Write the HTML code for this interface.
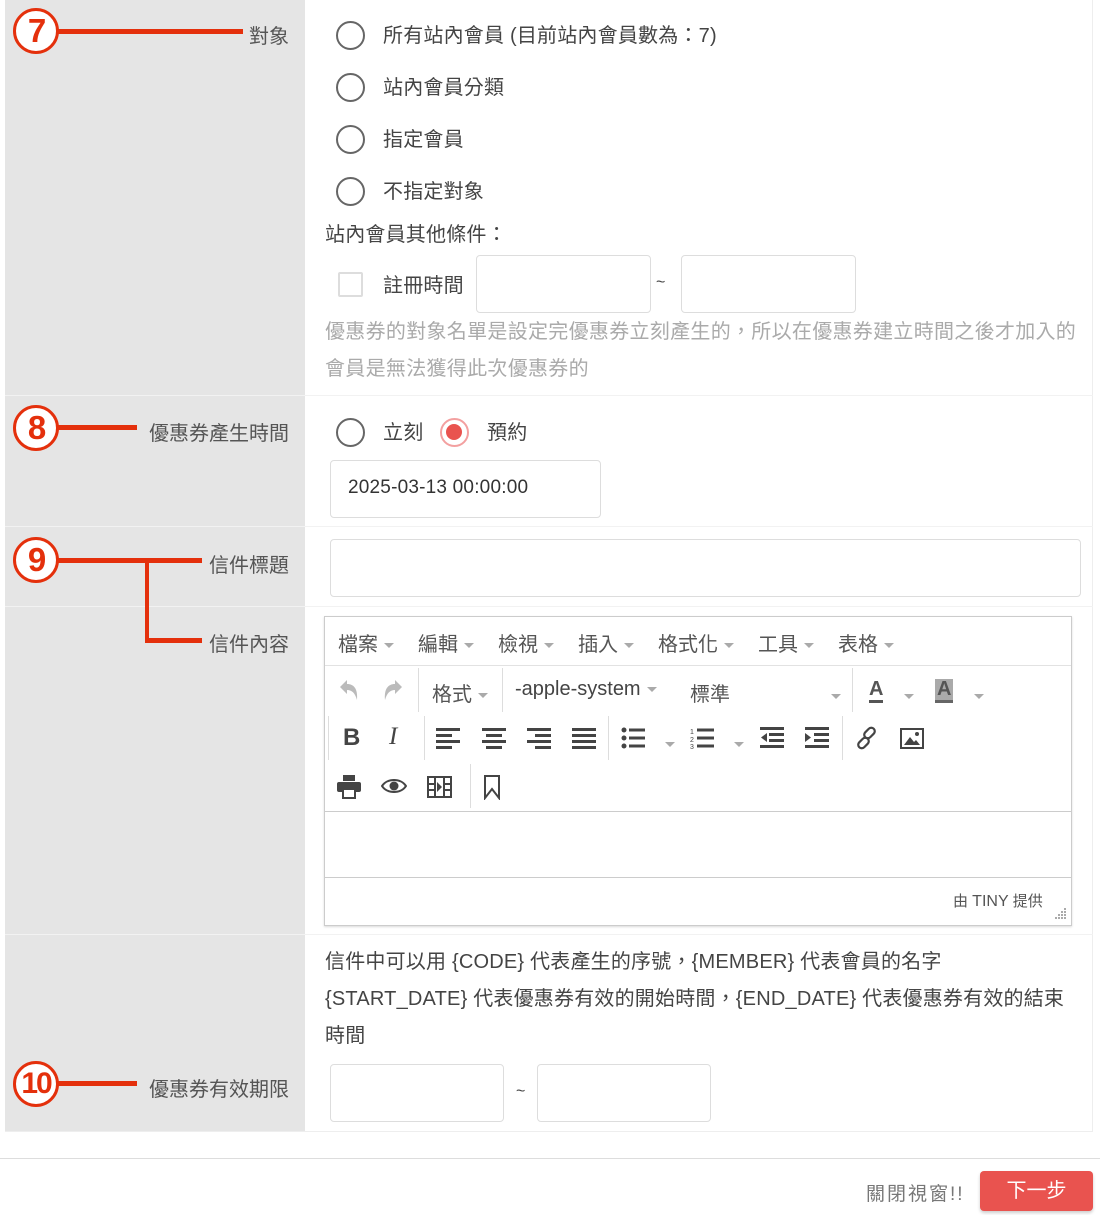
<!DOCTYPE html>
<html><head><meta charset="utf-8"><style>
*{margin:0;padding:0;box-sizing:border-box}
body{width:1100px;height:1215px;background:#fff;position:relative;font-family:"Liberation Sans","Noto Sans CJK TC",sans-serif;color:#444;overflow:hidden}
.a{position:absolute;white-space:nowrap}
.lab{background:#e5e5e5}
.t{font-size:20px;line-height:24px;letter-spacing:0.2px}
.lbl{font-size:20px;color:#555;text-align:right}
.inp{position:absolute;border:1px solid #ddd;border-radius:4px;background:#fff}
.rad{position:absolute;width:29px;height:29px;border:2.5px solid #666;border-radius:50%}
.line{position:absolute;background:#e4300c}
.mk{position:absolute;width:46px;height:46px;border:3.5px solid #e4300c;border-radius:50%;background:#fff;color:#e4300c;font-weight:bold;font-size:33px;line-height:39px;text-align:center;letter-spacing:-2px}
.hl{position:absolute;background:#eee;height:1px}
.mn{font-size:20px;color:#555}
.car{display:inline-block;width:0;height:0;border-left:5px solid transparent;border-right:5px solid transparent;border-top:5px solid #aaa;vertical-align:middle;margin-left:6px}
.sep{position:absolute;width:1px;background:#ddd}
</style></head><body>
<div class="a lab" style="left:5px;top:0;width:300px;height:1131px"></div>
<div class="a" style="left:1092px;top:0;width:1px;height:1131px;background:#eee"></div>
<div class="a" style="left:5px;top:1131px;width:1088px;height:1px;background:#eee"></div>
<div class="hl" style="left:5px;top:395px;width:1088px;background:#f2f2f2"></div>
<div class="hl" style="left:5px;top:526px;width:1088px;background:#f2f2f2"></div>
<div class="hl" style="left:5px;top:606px;width:1088px;background:#f2f2f2"></div>
<div class="hl" style="left:5px;top:934px;width:1088px;background:#f2f2f2"></div>

<div class="line" style="left:56px;top:29px;width:187px;height:5px"></div>
<div class="mk" style="left:13px;top:8px">7</div>
<div class="a lbl" style="left:200px;top:20px;width:89px">對象</div>

<div class="line" style="left:56px;top:425px;width:81px;height:5px"></div>
<div class="mk" style="left:13px;top:405px">8</div>
<div class="a lbl" style="left:140px;top:417px;width:149px">優惠券產生時間</div>

<div class="line" style="left:56px;top:558px;width:146px;height:5px"></div>
<div class="line" style="left:145px;top:558px;width:4px;height:84px"></div>
<div class="line" style="left:145px;top:638px;width:57px;height:5px"></div>
<div class="mk" style="left:13px;top:537px">9</div>
<div class="a lbl" style="left:200px;top:549px;width:89px">信件標題</div>
<div class="a lbl" style="left:200px;top:628px;width:89px">信件內容</div>

<div class="line" style="left:56px;top:1081px;width:81px;height:5px"></div>
<div class="mk" style="left:13px;top:1061px;font-size:30px">10</div>
<div class="a lbl" style="left:140px;top:1073px;width:149px">優惠券有效期限</div>

<div class="rad" style="left:336px;top:21px"></div><div class="a t" style="left:383px;top:24px">所有站內會員 (目前站內會員數為：7)</div>
<div class="rad" style="left:336px;top:73px"></div><div class="a t" style="left:383px;top:76px">站內會員分類</div>
<div class="rad" style="left:336px;top:125px"></div><div class="a t" style="left:383px;top:128px">指定會員</div>
<div class="rad" style="left:336px;top:177px"></div><div class="a t" style="left:383px;top:180px">不指定對象</div>
<div class="a t" style="left:325px;top:223px">站內會員其他條件：</div>
<div class="a" style="left:338px;top:272px;width:25px;height:25px;border:2px solid #ddd;border-radius:2px"></div>
<div class="a t" style="left:383px;top:274px">註冊時間</div>
<div class="inp" style="left:476px;top:255px;width:175px;height:58px"></div>
<div class="a t" style="left:656px;top:271px;font-size:16px">~</div>
<div class="inp" style="left:681px;top:255px;width:175px;height:58px"></div>
<div class="a t" style="left:325px;top:320px;color:#aaa;letter-spacing:0.3px">優惠券的對象名單是設定完優惠券立刻產生的，所以在優惠券建立時間之後才加入的</div>
<div class="a t" style="left:325px;top:357px;color:#aaa;letter-spacing:0.3px">會員是無法獲得此次優惠券的</div>

<div class="rad" style="left:336px;top:418px"></div><div class="a t" style="left:383px;top:421px">立刻</div>
<div class="rad" style="left:440px;top:418px;border-color:#f3a0a0"><div style="position:absolute;left:4px;top:4px;width:16px;height:16px;border-radius:50%;background:#e9534f"></div></div>
<div class="a t" style="left:487px;top:421px">預約</div>
<div class="inp" style="left:330px;top:460px;width:271px;height:58px"></div>
<div class="a t" style="left:348px;top:476px;color:#333;font-size:19px">2025-03-13 00:00:00</div>

<div class="inp" style="left:330px;top:539px;width:751px;height:58px"></div>

<div class="a" style="left:324px;top:616px;width:748px;height:310px;border:1px solid #ccc;box-shadow:0 1px 2px rgba(0,0,0,.15)"></div>
<div class="hl" style="left:325px;top:665px;width:746px;background:#e2e2e2"></div>
<div class="a mn" style="left:338px;top:628px">檔案<span class="car"></span></div>
<div class="a mn" style="left:418px;top:628px">編輯<span class="car"></span></div>
<div class="a mn" style="left:498px;top:628px">檢視<span class="car"></span></div>
<div class="a mn" style="left:578px;top:628px">插入<span class="car"></span></div>
<div class="a mn" style="left:658px;top:628px">格式化<span class="car"></span></div>
<div class="a mn" style="left:758px;top:628px">工具<span class="car"></span></div>
<div class="a mn" style="left:838px;top:628px">表格<span class="car"></span></div>
<svg class="a" style="left:338px;top:678px" width="22" height="24" viewBox="0 0 22 24"><path d="M2 9 L9 2 L9 6 C16 6 20 11 19 22 C17 15 14 12 9 12 L9 16 Z" fill="#bbb"/></svg>
<svg class="a" style="left:382px;top:678px" width="22" height="24" viewBox="0 0 22 24"><path d="M20 9 L13 2 L13 6 C6 6 2 11 3 22 C5 15 8 12 13 12 L13 16 Z" fill="#bbb"/></svg>
<div class="sep" style="left:418px;top:668px;height:44px"></div>
<div class="a mn" style="left:432px;top:678px">格式<span class="car"></span></div>
<div class="sep" style="left:502px;top:668px;height:44px"></div>
<div class="a mn" style="left:515px;top:678px;color:#444">-apple-system<span class="car"></span></div>
<div class="a mn" style="left:690px;top:678px">標準</div>
<div class="a" style="left:825px;top:688px"><span class="car"></span></div>
<div class="sep" style="left:852px;top:668px;height:44px"></div>
<div class="a" style="left:869px;top:679px;font-size:20px;font-weight:bold;color:#555;border-bottom:3px solid #555;line-height:21px">A</div>
<div class="a" style="left:898px;top:688px"><span class="car"></span></div>
<div class="a" style="left:935px;top:679px;font-size:20px;font-weight:bold;color:#555;background:#aaa;border-bottom:3px solid #666;line-height:21px;padding:0 2px">A</div>
<div class="a" style="left:968px;top:688px"><span class="car"></span></div>
<div class="sep" style="left:328px;top:716px;height:44px"></div>
<div class="a" style="left:343px;top:724px;font-size:24px;font-weight:bold;color:#444">B</div>
<div class="a" style="left:389px;top:723px;font-size:25px;font-style:italic;font-family:'Liberation Serif',serif;color:#444">I</div>
<div class="sep" style="left:424px;top:716px;height:44px"></div>
<svg class="a" style="left:436px;top:727px;" width="170" height="22">
<g fill="#444"><rect x="0" y="1" width="24" height="3"/><rect x="0" y="7" width="16" height="3"/><rect x="0" y="13" width="24" height="3"/><rect x="0" y="19" width="16" height="3"/>
<rect x="46" y="1" width="24" height="3"/><rect x="50" y="7" width="16" height="3"/><rect x="46" y="13" width="24" height="3"/><rect x="50" y="19" width="16" height="3"/>
<rect x="91" y="1" width="24" height="3"/><rect x="99" y="7" width="16" height="3"/><rect x="91" y="13" width="24" height="3"/><rect x="99" y="19" width="16" height="3"/>
<rect x="136" y="1" width="24" height="3"/><rect x="136" y="7" width="24" height="3"/><rect x="136" y="13" width="24" height="3"/><rect x="136" y="19" width="24" height="3"/></g></svg>
<div class="sep" style="left:608px;top:716px;height:44px"></div>
<svg class="a" style="left:621px;top:727px" width="24" height="22"><g fill="#444"><circle cx="3" cy="3" r="2.5"/><circle cx="3" cy="11" r="2.5"/><circle cx="3" cy="19" r="2.5"/><rect x="8" y="1.5" width="16" height="3"/><rect x="8" y="9.5" width="16" height="3"/><rect x="8" y="17.5" width="16" height="3"/></g></svg>
<div class="a" style="left:659px;top:736px"><span class="car"></span></div>
<svg class="a" style="left:690px;top:727px" width="24" height="22"><g fill="#444"><text x="0" y="7" font-size="7" font-family="Liberation Sans">1</text><text x="0" y="15" font-size="7" font-family="Liberation Sans">2</text><text x="0" y="22" font-size="7" font-family="Liberation Sans">3</text><rect x="7" y="1.5" width="17" height="3"/><rect x="7" y="9.5" width="17" height="3"/><rect x="7" y="17.5" width="17" height="3"/></g></svg>
<div class="a" style="left:728px;top:736px"><span class="car"></span></div>
<svg class="a" style="left:760px;top:727px" width="70" height="22"><g fill="#444"><rect x="0" y="0" width="24" height="3"/><rect x="9" y="6" width="15" height="3"/><rect x="9" y="12" width="15" height="3"/><rect x="0" y="18" width="24" height="3"/><path d="M1 10.5 L7 6 L7 15Z"/>
<rect x="45" y="0" width="24" height="3"/><rect x="54" y="6" width="15" height="3"/><rect x="54" y="12" width="15" height="3"/><rect x="45" y="18" width="24" height="3"/><path d="M51 10.5 L45 6 L45 15Z"/></g></svg>
<div class="sep" style="left:842px;top:716px;height:44px"></div>
<svg class="a" style="left:855px;top:726px" width="24" height="24" viewBox="0 0 24 24"><g fill="none" stroke="#444" stroke-width="2.2"><rect x="11" y="1" width="7" height="12" rx="3.5" transform="rotate(45 14.5 7)"/><rect x="5" y="11" width="7" height="12" rx="3.5" transform="rotate(45 8.5 17)"/></g></svg>
<svg class="a" style="left:900px;top:728px" width="24" height="22"><rect x="1" y="1" width="22" height="19" fill="none" stroke="#444" stroke-width="2"/><path d="M4 17 L10 9 L14 14 L16 12 L20 17Z" fill="#444"/><circle cx="17" cy="6" r="2" fill="#444"/></svg>
<svg class="a" style="left:337px;top:775px" width="24" height="24"><g fill="#444"><rect x="6" y="0" width="12" height="6"/><rect x="0" y="7" width="24" height="10" rx="2"/><rect x="6" y="14" width="12" height="9" fill="#fff" stroke="#444" stroke-width="2"/></g></svg>
<svg class="a" style="left:381px;top:777px" width="26" height="18"><path d="M1 9 C6 1 20 1 25 9 C20 17 6 17 1 9Z" fill="none" stroke="#444" stroke-width="2"/><circle cx="13" cy="9" r="4.5" fill="#444"/></svg>
<svg class="a" style="left:427px;top:776px" width="25" height="22"><rect x="1" y="1" width="23" height="20" fill="none" stroke="#444" stroke-width="2"/><g fill="#444"><rect x="7" y="1" width="2" height="20"/><rect x="16" y="1" width="2" height="20"/><rect x="1" y="7" width="6" height="2"/><rect x="1" y="13" width="6" height="2"/><rect x="18" y="7" width="6" height="2"/><rect x="18" y="13" width="6" height="2"/><path d="M10 6 L15 11 L10 16Z"/></g></svg>
<div class="sep" style="left:470px;top:764px;height:44px"></div>
<svg class="a" style="left:484px;top:775px" width="16" height="25"><path d="M1 1 H15 V23 L8 14 L1 23Z" fill="none" stroke="#444" stroke-width="2"/></svg>
<div class="hl" style="left:325px;top:811px;width:746px;background:#ccc"></div>
<div class="hl" style="left:325px;top:877px;width:746px;background:#ccc"></div>
<div class="a" style="left:953px;top:890px;font-size:15px;color:#555">由 <span style="font-size:16px">TINY</span> 提供</div>
<svg class="a" style="left:1054px;top:906px" width="14" height="14"><g fill="#aaa"><rect x="10" y="2" width="2" height="2"/><rect x="7" y="5" width="2" height="2"/><rect x="10" y="5" width="2" height="2"/><rect x="4" y="8" width="2" height="2"/><rect x="7" y="8" width="2" height="2"/><rect x="10" y="8" width="2" height="2"/><rect x="1" y="11" width="2" height="2"/><rect x="4" y="11" width="2" height="2"/><rect x="7" y="11" width="2" height="2"/><rect x="10" y="11" width="2" height="2"/></g></svg>

<div class="a t" style="left:325px;top:950px">信件中可以用 {CODE} 代表產生的序號，{MEMBER} 代表會員的名字</div>
<div class="a t" style="left:325px;top:987px">{START_DATE} 代表優惠券有效的開始時間，{END_DATE} 代表優惠券有效的結束</div>
<div class="a t" style="left:325px;top:1024px">時間</div>
<div class="inp" style="left:330px;top:1064px;width:174px;height:58px"></div>
<div class="a t" style="left:516px;top:1080px;font-size:16px">~</div>
<div class="inp" style="left:537px;top:1064px;width:174px;height:58px"></div>

<div class="a" style="left:0;top:1158px;width:1100px;height:1px;background:#ddd"></div>
<div class="a" style="left:866px;top:1179px;font-size:19px;color:#777;letter-spacing:2px">關閉視窗!!</div>
<div class="a" style="left:980px;top:1171px;width:113px;height:40px;background:#e9534f;border-radius:4px;color:#fff;font-size:20px;text-align:center;line-height:40px;box-shadow:0 2px 3px rgba(0,0,0,.2)">下一步</div>
</body></html>
